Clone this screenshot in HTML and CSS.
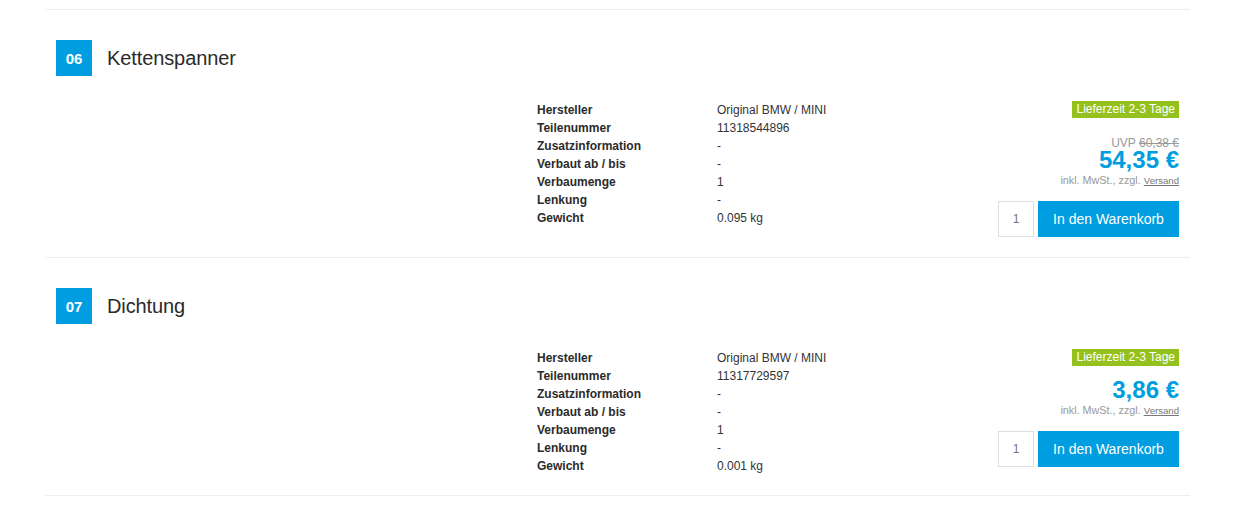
FILE: index.html
```html
<!DOCTYPE html>
<html lang="de">
<head>
<meta charset="utf-8">
<title>Teile</title>
<link rel="stylesheet" href="styles.css">
</head>
<body>
<div class="list">
  <section class="item">
    <div class="item-head">
      <span class="pos">06</span>
      <h2 class="item-title">Kettenspanner</h2>
    </div>
    <div class="item-body">
      <dl class="specs">
        <dt>Hersteller</dt><dd>Original BMW / MINI</dd>
        <dt>Teilenummer</dt><dd>11318544896</dd>
        <dt>Zusatzinformation</dt><dd>-</dd>
        <dt>Verbaut ab / bis</dt><dd>-</dd>
        <dt>Verbaumenge</dt><dd>1</dd>
        <dt>Lenkung</dt><dd>-</dd>
        <dt>Gewicht</dt><dd>0.095 kg</dd>
      </dl>
      <div class="buy">
        <span class="delivery">Lieferzeit 2-3 Tage</span>
        <div class="prices">
          <div class="uvp">UVP <s>60,38 €</s></div>
          <div class="price">54,35 €</div>
        </div>
        <div class="tax">inkl. MwSt., zzgl. <a class="ship" href="#">Versand</a></div>
        <div class="cart">
          <span class="qty">1</span>
          <button class="add" type="button">In den Warenkorb</button>
        </div>
      </div>
    </div>
  </section>
  <section class="item">
    <div class="item-head">
      <span class="pos">07</span>
      <h2 class="item-title">Dichtung</h2>
    </div>
    <div class="item-body">
      <dl class="specs">
        <dt>Hersteller</dt><dd>Original BMW / MINI</dd>
        <dt>Teilenummer</dt><dd>11317729597</dd>
        <dt>Zusatzinformation</dt><dd>-</dd>
        <dt>Verbaut ab / bis</dt><dd>-</dd>
        <dt>Verbaumenge</dt><dd>1</dd>
        <dt>Lenkung</dt><dd>-</dd>
        <dt>Gewicht</dt><dd>0.001 kg</dd>
      </dl>
      <div class="buy">
        <span class="delivery">Lieferzeit 2-3 Tage</span>
        <div class="prices">
          <div class="price">3,86 €</div>
        </div>
        <div class="tax">inkl. MwSt., zzgl. <a class="ship" href="#">Versand</a></div>
        <div class="cart">
          <span class="qty">1</span>
          <button class="add" type="button">In den Warenkorb</button>
        </div>
      </div>
    </div>
  </section>
</div>
</body>
</html>
```

FILE: styles.css
```css
html, body {
  margin: 0;
  padding: 0;
  background: #fff;
}
body {
  font-family: "Liberation Sans", Arial, sans-serif;
  color: #333;
  padding-top: 9px;
}
.list {
  margin-left: 45px;
  width: 1145px;
  border-bottom: 1px solid #eeeeee;
}
.item {
  border-top: 1px solid #eeeeee;
  padding: 30px 11px 20px 11px;
}
.item-head {
  display: flex;
  align-items: center;
  gap: 15px;
  height: 36px;
}
.pos {
  width: 36px;
  height: 36px;
  background: #009ee0;
  color: #fff;
  font-weight: bold;
  font-size: 15px;
  display: flex;
  align-items: center;
  justify-content: center;
}
.item-title {
  margin: 0;
  font-size: 20px;
  font-weight: normal;
  color: #2b2b2b;
  letter-spacing: -0.1px;
}
.item-body {
  display: flex;
  margin-top: 24px;
  padding-left: 481px;
}
.specs {
  flex: 1;
  margin: 0;
  padding-top: 1px;
  display: grid;
  grid-template-columns: 180px auto;
  grid-auto-rows: 18px;
  align-content: start;
  font-size: 12px;
  line-height: 18px;
}
.specs dt {
  font-weight: bold;
  color: #2b2b2b;
}
.specs dd {
  margin: 0;
  color: #333;
}
.buy {
  width: 190px;
  display: flex;
  flex-direction: column;
  align-items: flex-end;
}
.delivery {
  margin-top: 1px;
  background: #95c11f;
  color: #fff;
  font-size: 12px;
  line-height: 17px;
  padding: 0 4px 0 4px;
}
.prices {
  margin-top: 15px;
  text-align: right;
}
.uvp {
  font-size: 12px;
  line-height: 14px;
  margin: 3px 0 1px 0;
  color: #999;
}
.uvp s {
  color: #999;
}
.price {
  font-size: 24px;
  font-weight: bold;
  line-height: 18px;
  color: #009ee0;
}
.tax {
  margin-top: 4px;
  font-size: 10.8px;
  line-height: 14px;
  color: #999;
}
.ship {
  font-size: 9.6px;
  color: #777;
  text-decoration: underline;
}
.cart {
  margin-top: 13px;
  display: flex;
  gap: 4px;
}
.qty {
  box-sizing: border-box;
  width: 36px;
  height: 36px;
  border: 1px solid #dddddd;
  display: flex;
  align-items: center;
  justify-content: center;
  font-size: 12px;
  color: #777;
}
.add {
  width: 141px;
  height: 36px;
  border: 0;
  margin: 0;
  padding: 0;
  background: #009ee0;
  color: #fff;
  font-family: "Liberation Sans", Arial, sans-serif;
  font-size: 14px;
  cursor: pointer;
}
```
